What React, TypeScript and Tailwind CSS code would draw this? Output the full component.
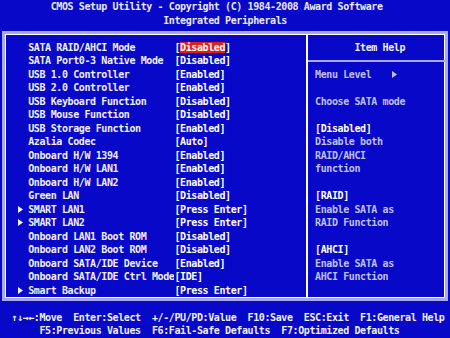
const items: { label: string; value: string; sub?: boolean; active?: boolean }[] = [
  { label: "SATA RAID/AHCI Mode", value: "[Disabled]", active: true },
  { label: "SATA Port0-3 Native Mode", value: "[Disabled]" },
  { label: "USB 1.0 Controller", value: "[Enabled]" },
  { label: "USB 2.0 Controller", value: "[Enabled]" },
  { label: "USB Keyboard Function", value: "[Disabled]" },
  { label: "USB Mouse Function", value: "[Disabled]" },
  { label: "USB Storage Function", value: "[Enabled]" },
  { label: "Azalia Codec", value: "[Auto]" },
  { label: "Onboard H/W 1394", value: "[Enabled]" },
  { label: "Onboard H/W LAN1", value: "[Enabled]" },
  { label: "Onboard H/W LAN2", value: "[Enabled]" },
  { label: "Green LAN", value: "[Disabled]" },
  { label: "SMART LAN1", value: "[Press Enter]", sub: true },
  { label: "SMART LAN2", value: "[Press Enter]", sub: true },
  { label: "Onboard LAN1 Boot ROM", value: "[Disabled]" },
  { label: "Onboard LAN2 Boot ROM", value: "[Disabled]" },
  { label: "Onboard SATA/IDE Device", value: "[Enabled]" },
  { label: "Onboard SATA/IDE Ctrl Mode", value: "[IDE]" },
  { label: "Smart Backup", value: "[Press Enter]", sub: true },
];

// right panel rows, starting at screen row 5
const help: { text: string; strong?: boolean }[] = [
  { text: "Menu Level" },
  { text: "" },
  { text: "Choose SATA mode" },
  { text: "" },
  { text: "[Disabled]", strong: true },
  { text: "Disable both" },
  { text: "RAID/AHCI" },
  { text: "function" },
  { text: "" },
  { text: "[RAID]", strong: true },
  { text: "Enable SATA as" },
  { text: "RAID Function" },
  { text: "" },
  { text: "[AHCI]", strong: true },
  { text: "Enable SATA as" },
  { text: "AHCI Function" },
];

function Arrow() {
  return (
    <svg width="5" height="7" viewBox="0 0 5 7" className="shrink-0">
      <path d="M0 0L5 3.5L0 7Z" fill="currentColor" />
    </svg>
  );
}

function Row({ children, className = "" }: { children?: React.ReactNode; className?: string }) {
  return (
    <div className={`flex h-[13.5px] items-center whitespace-pre leading-[13.5px] ${className}`}>
      {children}
    </div>
  );
}

export default function App() {
  return (
    <div
      className="h-[338px] w-[450px] overflow-hidden bg-[#0808c8] text-[10px] font-bold tracking-[-0.395px] text-[#f0f0f8]"
      style={{ fontFamily: '"DejaVu Sans Mono", "Liberation Mono", monospace' }}
    >
      {/* header */}
      <Row className="pl-[50.625px] text-[#e8e8f8]">
        CMOS Setup Utility - Copyright (C) 1984-2008 Award Software
      </Row>
      <Row className="pl-[163.125px] text-[#e8e8f8]">Integrated Peripherals</Row>

      {/* main box */}
      <div className="ml-[2px] mt-[4px] flex h-[270px] w-[446px] border-[3px] border-[#a8a8f4] shadow-[inset_0_0_0_1px_#ffffff]">
        <div className="w-[300.5px] pl-[12.5px] pt-[6.5px]">
          {items.map((it) => (
            <Row key={it.label}>
              <span className="flex w-[10.625px]">{it.sub ? <Arrow /> : null}</span>
              <span className="w-[146.25px] overflow-hidden">{it.label}</span>
              {it.active ? (
                <span className="text-white">
                  [<span className="bg-[#e02018]">Disabled</span>]
                </span>
              ) : (
                <span className="text-white">{it.value}</span>
              )}
            </Row>
          ))}
        </div>

        <div className="w-[2px] bg-white" />

        <div className="flex-1 pt-[6.5px]">
          <Row className="pl-[46.875px]">Item Help</Row>
          <div className="flex h-[13.5px] items-center">
            <div className="h-[2px] w-full bg-[#a8a8f4]" />
          </div>
          {help.map((h, i) => (
            <Row
              key={i}
              className={`pl-[7.5px] ${h.strong ? "text-white" : "text-[#c0c0ec]"}`}
            >
              {h.text}
              {i === 0 ? (
                <span className="ml-[20.5px] flex text-[#c0c0ec]">
                  <Arrow />
                </span>
              ) : null}
            </Row>
          ))}
        </div>
      </div>

      {/* footer */}
      <div className="mt-[9.5px]">
        <Row className="pl-[11.25px]">
          {"\u2191\u2193\u2192\u2190:Move  Enter:Select  +/-/PU/PD:Value  F10:Save  ESC:Exit  F1:General Help"}
        </Row>
        <Row className="pl-[39.375px]">
          F5:Previous Values  F6:Fail-Safe Defaults  F7:Optimized Defaults
        </Row>
      </div>
    </div>
  );
}
